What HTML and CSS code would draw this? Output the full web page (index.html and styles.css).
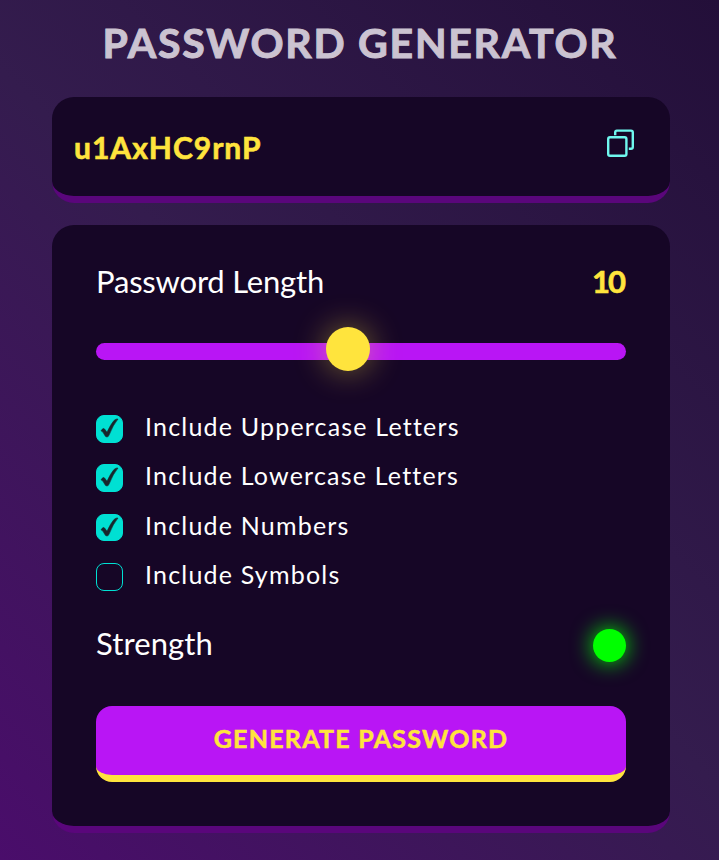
FILE: index.html
```html
<!DOCTYPE html>
<html lang="en">
<head>
<meta charset="utf-8">
<title>Password Generator</title>
<link rel="stylesheet" href="styles.css">
</head>
<body>
<main class="container">
  <h1 class="title"><span>PASSWORD GENERATOR</span></h1>
  <section class="display">
    <span class="password">u1AxHC9rnP</span>
    <button class="copy" aria-label="Copy"><svg width="30" height="30" viewBox="0 0 30 30" fill="none" stroke="#6ff7ee" stroke-width="2.4" stroke-linejoin="round"><rect x="2.2" y="8.2" width="18.2" height="18.6" rx="1.8"/><path d="M9.2 6.2V3.2q0-1.6 1.6-1.6H25q1.8 0 1.8 1.8V18q0 1.8-1.8 1.8h-2.2"/></svg></button>
  </section>
  <section class="panel">
    <div class="row length"><span class="label length-label">Password Length</span><span class="value">10</span></div>
    <div class="slider"><div class="thumb"></div></div>
    <div class="options">
      <label class="option"><span class="box checked"><svg viewBox="0 0 27 27"><path d="M5 15.8Q7.4 12 9 14.6L11 17.3Q14.5 9.5 18 5.5Q20 3.5 22 4Q17 10 13.3 19.6Q12.5 22 11 22Q9.4 22 8.6 20Q7 16.3 5 15.8Z"/></svg></span><span class="text upper">Include Uppercase Letters</span></label>
      <label class="option"><span class="box checked"><svg viewBox="0 0 27 27"><path d="M5 15.8Q7.4 12 9 14.6L11 17.3Q14.5 9.5 18 5.5Q20 3.5 22 4Q17 10 13.3 19.6Q12.5 22 11 22Q9.4 22 8.6 20Q7 16.3 5 15.8Z"/></svg></span><span class="text lower">Include Lowercase Letters</span></label>
      <label class="option"><span class="box checked"><svg viewBox="0 0 27 27"><path d="M5 15.8Q7.4 12 9 14.6L11 17.3Q14.5 9.5 18 5.5Q20 3.5 22 4Q17 10 13.3 19.6Q12.5 22 11 22Q9.4 22 8.6 20Q7 16.3 5 15.8Z"/></svg></span><span class="text numbers">Include Numbers</span></label>
      <label class="option"><span class="box"></span><span class="text symbols">Include Symbols</span></label>
    </div>
    <div class="row strength"><span class="label strength-label">Strength</span><span class="dot"></span></div>
    <button class="generate">GENERATE PASSWORD</button>
  </section>
</main>
</body>
</html>
```
FILE: styles.css
```css
* { box-sizing: border-box; }
body {
  margin: 0;
  height: 860px;
  overflow: hidden;
  background: linear-gradient(45deg, #4a0d6b 0%, #341c4e 50%, #230f39 100%);
  font-family: Lato, "Liberation Sans", sans-serif;
  color: #fff;
}
.container { width: 618px; margin-left: 52px; }
.title {
  margin: 0;
  height: 97px;
  padding-top: 18px;
  padding-right: 2px;
  font-size: 41px;
  line-height: 50px;
  font-weight: 700;
  letter-spacing: 1.75px;
  -webkit-text-stroke: 1px #cbc3d1;
  text-align: center;
  color: #cbc3d1;
  white-space: nowrap;
}
.display {
  height: 106px;
  padding: 0 34px 0 22px;
  display: flex;
  align-items: center;
  justify-content: space-between;
  background: #160626;
  border-bottom: 7px solid #5a067b;
  border-radius: 22px;
}
.password {
  font-size: 30px;
  line-height: 36px;
  font-weight: 700;
  letter-spacing: 1px;
  color: #ffe43d;
  -webkit-text-stroke: .6px #ffe43d;
}
.copy { width: 30px; height: 30px; padding: 0; border: 0; background: none; margin-bottom: 5px; }
.copy svg { display: block; }
.panel {
  margin-top: 22px;
  height: 608px;
  padding: 36px 44px 44px;
  background: #160626;
  border-bottom: 7px solid #5a067b;
  border-radius: 22px;
}
.row { display: flex; align-items: center; justify-content: space-between; }
.length { height: 42px; padding-bottom: 2px; }
.label, .value { font-size: 31px; line-height: 40px; white-space: nowrap; }
.length-label { letter-spacing: -.2px; }
.strength-label { letter-spacing: .1px; margin-bottom: 4px; }
.value { font-weight: 700; color: #ffe43d; letter-spacing: -2px; padding-right: 2px; -webkit-text-stroke: .6px #ffe43d; }
.slider {
  height: 17px;
  margin-top: 40px;
  padding-left: 230px;
  display: flex;
  align-items: center;
  border-radius: 9px;
  background: #b915f5;
}
.thumb {
  width: 44px;
  height: 44px;
  flex: none;
  margin-bottom: 5px;
  border-radius: 50%;
  background: #ffe43d;
  box-shadow: 0 0 33px rgba(255, 228, 61, .45);
}
.options { margin-top: 55px; display: grid; grid-auto-rows: 49.4px; }
.option { display: flex; align-items: flex-start; gap: 22px; }
.box { width: 27px; height: 27.5px; border: 1px solid #00e0d3; border-radius: 8px; flex: none; }
.checked { background: #00e0d3; }
.box svg { display: block; width: 27px; height: 27px; margin: -1px; fill: #17262c; stroke: #17262c; stroke-width: .6; }
.text { font-size: 25px; line-height: 30px; margin-top: -4px; letter-spacing: 1.2px; white-space: nowrap; }
.strength { height: 42px; margin-top: 11px; }
.dot {
  width: 33px;
  height: 33px;
  margin-top: 2px;
  border-radius: 50%;
  background: #0f0;
  box-shadow: 0 0 22px #0f0;
}
.generate {
  display: block;
  width: 530px;
  height: 76px;
  margin-top: 40px;
  padding: 0 0 4px;
  border: 0;
  border-bottom: 7px solid #ffe43d;
  border-radius: 16px;
  background: #b915f5;
  color: #ffe43d;
  font: 700 25px/30px Lato, "Liberation Sans", sans-serif;
  letter-spacing: 1.25px;
  -webkit-text-stroke: .5px #ffe43d;
}
```
